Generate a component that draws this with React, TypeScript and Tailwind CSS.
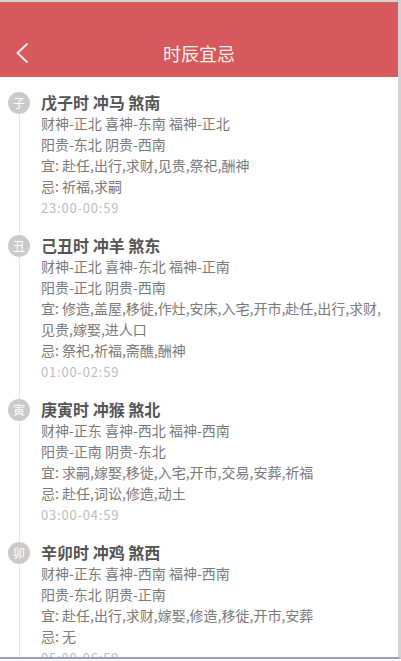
const items = [
  {
    zhi: "子",
    title: "戊子时 冲马 煞南",
    lines: [
      "财神-正北 喜神-东南 福神-正北",
      "阳贵-东北 阴贵-西南",
      "宜: 赴任,出行,求财,见贵,祭祀,酬神",
      "忌: 祈福,求嗣",
    ],
    time: "23:00-00:59",
  },
  {
    zhi: "丑",
    title: "己丑时 冲羊 煞东",
    lines: [
      "财神-正北 喜神-东北 福神-正南",
      "阳贵-正北 阴贵-西南",
      "宜: 修造,盖屋,移徙,作灶,安床,入宅,开市,赴任,出行,求财,见贵,嫁娶,进人口",
      "忌: 祭祀,祈福,斋醮,酬神",
    ],
    time: "01:00-02:59",
  },
  {
    zhi: "寅",
    title: "庚寅时 冲猴 煞北",
    lines: [
      "财神-正东 喜神-西北 福神-西南",
      "阳贵-正南 阴贵-东北",
      "宜: 求嗣,嫁娶,移徙,入宅,开市,交易,安葬,祈福",
      "忌: 赴任,词讼,修造,动土",
    ],
    time: "03:00-04:59",
  },
  {
    zhi: "卯",
    title: "辛卯时 冲鸡 煞西",
    lines: [
      "财神-正东 喜神-西南 福神-西南",
      "阳贵-东北 阴贵-正南",
      "宜: 赴任,出行,求财,嫁娶,修造,移徙,开市,安葬",
      "忌: 无",
    ],
    time: "05:00-06:59",
  },
];

function Row({ item }: { item: (typeof items)[number] }) {
  return (
    <div className="flex">
      <div className="ml-[8px] flex w-[22px] shrink-0 flex-col items-center">
        <div className="flex h-[22px] w-[22px] items-center justify-center rounded-full bg-[#cacaca] text-[12px] leading-none text-white">
          {item.zhi}
        </div>
        <div className="w-px flex-1 bg-[#e8e8e8]" />
      </div>
      <div className="ml-[11px] flex-1 pb-[17px] pr-[12px]">
        <div className="text-[16px] font-bold leading-[21px] text-[#555555]">{item.title}</div>
        {item.lines.map((l, i) => (
          <div key={i} className="text-[14px] leading-[21px] text-[#7a7a7a]">
            {l}
          </div>
        ))}
        <div className="text-[13px] leading-[21px] tracking-[0.8px] text-[#bdbdbd]">{item.time}</div>
      </div>
    </div>
  );
}

export default function App() {
  return (
    <div
      className="h-[661px] w-[401px] overflow-hidden bg-white"
      style={{ fontFamily: '"Noto Sans CJK SC", "Noto Sans", sans-serif' }}
    >
      <div className="flex h-[659px] border-r-[3px] border-t-2 border-[#d2d2d2] border-b-2 border-b-[#8fa3bf]">
        <div className="flex flex-1 flex-col overflow-hidden">
          <header className="flex h-[75px] shrink-0 flex-col bg-[#d65a5b]">
            <div className="h-[27px]" />
            <div className="relative flex h-[48px] items-center justify-center">
              <svg
                className="absolute left-[16px] top-[14px]"
                width="12"
                height="20"
                viewBox="0 0 12 20"
                fill="none"
                stroke="#fdf0f0"
                strokeWidth="1.8"
                strokeLinecap="round"
                strokeLinejoin="round"
              >
                <path d="M11 1 L1.5 10 L11 19" />
              </svg>
              <span className="text-[18px] text-[#fdf0f0]">时辰宜忌</span>
            </div>
          </header>
          <div className="pt-[15px]">
            {items.map((it) => (
              <Row key={it.zhi} item={it} />
            ))}
          </div>
        </div>
      </div>
    </div>
  );
}
